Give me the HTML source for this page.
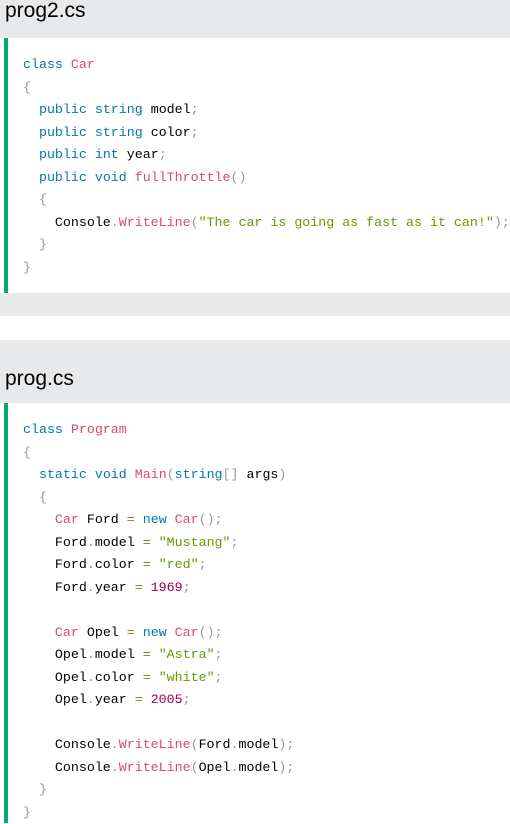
<!DOCTYPE html>
<html><head><style>
body{margin:0;width:510px;height:820px;overflow:hidden;background:#fff;font-family:"Liberation Sans",sans-serif}
.hd{background:#e7e9eb;position:absolute;left:0;width:510px}
.t{position:absolute;left:5px;font-size:21px;color:#000}
.code{position:absolute;left:4px;width:506px;background:#fff;border-left:4px solid #04aa6d;box-sizing:border-box;padding:16px 0 0 15px;font-family:"Liberation Mono",monospace;font-size:13.3px;line-height:22.5px;white-space:pre;color:#000}
.k{color:#0077aa}.c{color:#dd4a68}.p{color:#999}.s{color:#669900}.o{color:#9a6e3a}.n{color:#990055}
</style></head><body>
<div class="hd" style="top:0;height:38px"><div class="t" style="top:-1px">prog2.cs</div></div>
<div class="code" style="top:38px;height:255px"><span class="k">class</span> <span class="c">Car</span>
<span class="p">{</span>
  <span class="k">public</span> <span class="k">string</span> model<span class="p">;</span>
  <span class="k">public</span> <span class="k">string</span> color<span class="p">;</span>
  <span class="k">public</span> <span class="k">int</span> year<span class="p">;</span>
  <span class="k">public</span> <span class="k">void</span> <span class="c">fullThrottle</span><span class="p">()</span>
  <span class="p">{</span>
    Console<span class="p">.</span><span class="c">WriteLine</span><span class="p">(</span><span class="s">"The car is going as fast as it can!"</span><span class="p">);</span>
  <span class="p">}</span>
<span class="p">}</span></div>
<div class="hd" style="top:293px;height:23px"></div>
<div class="hd" style="top:340px;height:63px"><div class="t" style="top:27px">prog.cs</div></div>
<div class="code" style="top:403px;height:420px"><span class="k">class</span> <span class="c">Program</span>
<span class="p">{</span>
  <span class="k">static</span> <span class="k">void</span> <span class="c">Main</span><span class="p">(</span><span class="k">string</span><span class="p">[]</span> args<span class="p">)</span>
  <span class="p">{</span>
    <span class="c">Car</span> Ford <span class="o">=</span> <span class="k">new</span> <span class="c">Car</span><span class="p">();</span>
    Ford<span class="p">.</span>model <span class="o">=</span> <span class="s">"Mustang"</span><span class="p">;</span>
    Ford<span class="p">.</span>color <span class="o">=</span> <span class="s">"red"</span><span class="p">;</span>
    Ford<span class="p">.</span>year <span class="o">=</span> <span class="n">1969</span><span class="p">;</span>

    <span class="c">Car</span> Opel <span class="o">=</span> <span class="k">new</span> <span class="c">Car</span><span class="p">();</span>
    Opel<span class="p">.</span>model <span class="o">=</span> <span class="s">"Astra"</span><span class="p">;</span>
    Opel<span class="p">.</span>color <span class="o">=</span> <span class="s">"white"</span><span class="p">;</span>
    Opel<span class="p">.</span>year <span class="o">=</span> <span class="n">2005</span><span class="p">;</span>

    Console<span class="p">.</span><span class="c">WriteLine</span><span class="p">(</span>Ford<span class="p">.</span>model<span class="p">);</span>
    Console<span class="p">.</span><span class="c">WriteLine</span><span class="p">(</span>Opel<span class="p">.</span>model<span class="p">);</span>
  <span class="p">}</span>
<span class="p">}</span></div>
</body></html>
